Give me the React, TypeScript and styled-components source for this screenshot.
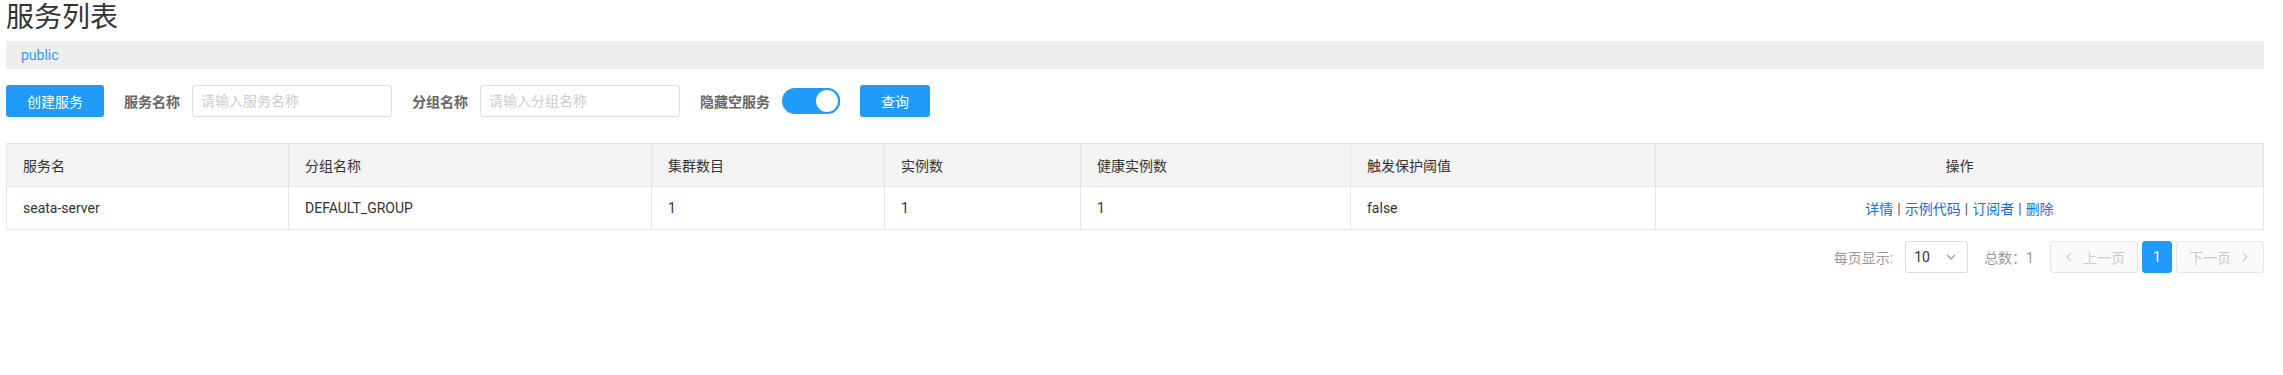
import React, { useState } from 'react';
import styled, { createGlobalStyle } from 'styled-components';

const GlobalStyle = createGlobalStyle`
  body {
    margin: 0;
    background: #fff;
    font-family: Roboto, "Noto Sans CJK SC", sans-serif;
    font-size: 14px;
    color: #333;
  }
`;

const COLUMNS = [
  { key: 'name', title: '服务名', width: 282 },
  { key: 'groupName', title: '分组名称', width: 363 },
  { key: 'clusterCount', title: '集群数目', width: 233 },
  { key: 'ipCount', title: '实例数', width: 196 },
  { key: 'healthyInstanceCount', title: '健康实例数', width: 270 },
  { key: 'triggerFlag', title: '触发保护阈值', width: 305 },
];

const SERVICES = [
  {
    name: 'seata-server',
    groupName: 'DEFAULT_GROUP',
    clusterCount: 1,
    ipCount: 1,
    healthyInstanceCount: 1,
    triggerFlag: 'false',
  },
];

const ACTIONS = ['详情', '示例代码', '订阅者', '删除'];

export default function App() {
  const [hideEmpty, setHideEmpty] = useState(true);

  return (
    <Page>
      <GlobalStyle />
      <Title>服务列表</Title>
      <NamespaceBar>
        <NamespaceLink>public</NamespaceLink>
      </NamespaceBar>

      <Toolbar>
        <Button>创建服务</Button>
        <FormItem>
          <Label>服务名称</Label>
          <Input placeholder="请输入服务名称" />
        </FormItem>
        <FormItem>
          <Label>分组名称</Label>
          <Input placeholder="请输入分组名称" />
        </FormItem>
        <FormItem>
          <Label>隐藏空服务</Label>
          <Switch $on={hideEmpty} onClick={() => setHideEmpty(!hideEmpty)}>
            <Knob $on={hideEmpty} />
          </Switch>
        </FormItem>
        <Button $narrow>查询</Button>
      </Toolbar>

      <Table>
        <colgroup>
          {COLUMNS.map((col) => (
            <col key={col.key} style={{ width: col.width }} />
          ))}
          <col />
        </colgroup>
        <thead>
          <tr>
            {COLUMNS.map((col) => (
              <Th key={col.key}>{col.title}</Th>
            ))}
            <Th $center>操作</Th>
          </tr>
        </thead>
        <tbody>
          {SERVICES.map((service) => (
            <tr key={service.name}>
              {COLUMNS.map((col) => (
                <Td key={col.key}>{(service as any)[col.key]}</Td>
              ))}
              <Td $center>
                {ACTIONS.map((action, i) => (
                  <React.Fragment key={action}>
                    {i > 0 && <Divider>|</Divider>}
                    <ActionLink>{action}</ActionLink>
                  </React.Fragment>
                ))}
              </Td>
            </tr>
          ))}
        </tbody>
      </Table>

      <Pagination>
        <PageLabel>每页显示:</PageLabel>
        <PageSizeSelect>
          <span>10</span>
          <svg width="12" height="12" viewBox="0 0 12 12">
            <path d="M2 4 L6 8 L10 4" fill="none" stroke="#999" strokeWidth="1.2" />
          </svg>
        </PageSizeSelect>
        <PageTotal>总数：1</PageTotal>
        <PagerGroup>
          <PageButton disabled $wide>
            <svg width="12" height="12" viewBox="0 0 12 12">
              <path d="M8 2 L4 6 L8 10" fill="none" stroke="#ccc" strokeWidth="1.2" />
            </svg>
            上一页
          </PageButton>
          <PageButton $active>1</PageButton>
          <PageButton disabled $wide>
            下一页
            <svg width="12" height="12" viewBox="0 0 12 12">
              <path d="M4 2 L8 6 L4 10" fill="none" stroke="#ccc" strokeWidth="1.2" />
            </svg>
          </PageButton>
        </PagerGroup>
      </Pagination>
    </Page>
  );
}

const Page = styled.div`
  padding: 0 19px 0 6px;
`;

const Title = styled.h1`
  margin: 0;
  font-size: 28px;
  line-height: 36px;
  font-weight: normal;
  color: #333;
`;

const NamespaceBar = styled.div`
  margin-top: 5px;
  height: 28px;
  background: #eee;
  display: flex;
  align-items: center;
  padding-left: 15px;
`;

const NamespaceLink = styled.a`
  color: #2e9af4;
  font-size: 14px;
  cursor: pointer;
`;

const Toolbar = styled.div`
  margin-top: 16px;
  display: flex;
  align-items: center;
  gap: 20px;
  height: 32px;
`;

const Button = styled.button<{ $narrow?: boolean }>`
  height: 32px;
  width: ${(p) => (p.$narrow ? '70px' : '98px')};
  border: none;
  border-radius: 3px;
  background: #209bfa;
  color: #fff;
  font-family: inherit;
  font-size: 14px;
  cursor: pointer;
`;

const FormItem = styled.div`
  display: flex;
  align-items: center;
  gap: 12px;
`;

const Label = styled.label`
  color: #666;
  font-weight: bold;
  font-size: 14px;
`;

const Input = styled.input`
  box-sizing: border-box;
  width: 200px;
  height: 32px;
  border: 1px solid #dcdcdc;
  border-radius: 3px;
  padding: 0 8px;
  font-family: inherit;
  font-size: 14px;
  color: #333;
  outline: none;
  &::placeholder {
    color: #ccc;
  }
`;

const Switch = styled.div<{ $on: boolean }>`
  position: relative;
  box-sizing: border-box;
  width: 58px;
  height: 26px;
  border-radius: 13px;
  background: ${(p) => (p.$on ? '#209bfa' : '#e6e6e6')};
  cursor: pointer;
`;

const Knob = styled.span<{ $on: boolean }>`
  position: absolute;
  top: 0;
  left: ${(p) => (p.$on ? '32px' : '0')};
  box-sizing: border-box;
  width: 26px;
  height: 26px;
  border-radius: 50%;
  background: #fff;
  border: 2px solid #209bfa;
`;

const Table = styled.table`
  margin-top: 26px;
  width: 100%;
  table-layout: fixed;
  border-collapse: collapse;
  border: 1px solid #e6e6e6;
`;

const Th = styled.th<{ $center?: boolean }>`
  height: 42px;
  padding: 0 16px;
  background: #f4f4f4;
  border: 1px solid #e6e6e6;
  text-align: ${(p) => (p.$center ? 'center' : 'left')};
  font-weight: normal;
  color: #333;
  font-size: 14px;
`;

const Td = styled.td<{ $center?: boolean }>`
  height: 42px;
  padding: 0 16px;
  border: 1px solid #e6e6e6;
  text-align: ${(p) => (p.$center ? 'center' : 'left')};
  color: #333;
  font-size: 14px;
`;

const ActionLink = styled.a`
  color: #1a6fd0;
  cursor: pointer;
`;

const Divider = styled.span`
  color: #555;
  margin: 0 4px;
`;

const Pagination = styled.div`
  margin-top: 11px;
  display: flex;
  justify-content: flex-end;
  align-items: center;
  height: 32px;
`;

const PageLabel = styled.span`
  color: #999;
  font-size: 14px;
  margin-right: 12px;
`;

const PageSizeSelect = styled.div`
  box-sizing: border-box;
  width: 63px;
  height: 32px;
  border: 1px solid #dcdcdc;
  border-radius: 3px;
  display: flex;
  align-items: center;
  justify-content: space-between;
  padding: 0 10px 0 8px;
  color: #333;
  font-size: 14px;
`;

const PageTotal = styled.span`
  color: #999;
  font-size: 14px;
  margin: 0 16px 0 16px;
`;

const PagerGroup = styled.div`
  display: flex;
  gap: 4px;
`;

const PageButton = styled.button<{ $active?: boolean; $wide?: boolean }>`
  box-sizing: border-box;
  height: 32px;
  width: ${(p) => (p.$wide ? '88px' : '30px')};
  border-radius: 3px;
  border: 1px solid ${(p) => (p.$active ? '#209bfa' : '#e6e6e6')};
  background: ${(p) => (p.$active ? '#209bfa' : '#fafafa')};
  color: ${(p) => (p.$active ? '#fff' : '#ccc')};
  font-family: inherit;
  font-size: 14px;
  display: flex;
  align-items: center;
  justify-content: center;
  gap: 8px;
  padding: 0;
`;
